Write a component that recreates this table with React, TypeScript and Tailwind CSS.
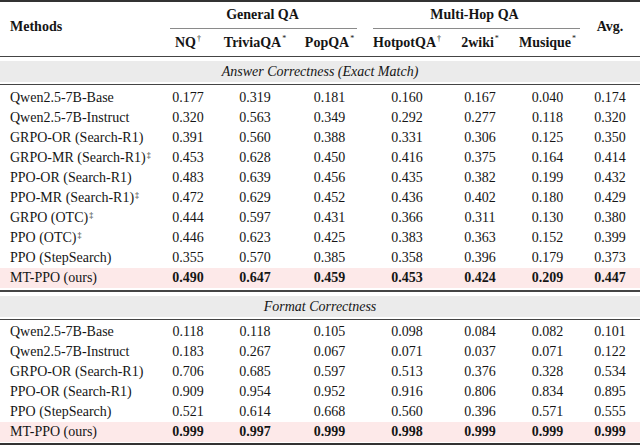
import React from "react";

type Row = { name: string; mark?: string; vals: string[]; ours?: boolean };

const answer: Row[] = [
  { name: "Qwen2.5-7B-Base", vals: ["0.177", "0.319", "0.181", "0.160", "0.167", "0.040", "0.174"] },
  { name: "Qwen2.5-7B-Instruct", vals: ["0.320", "0.563", "0.349", "0.292", "0.277", "0.118", "0.320"] },
  { name: "GRPO-OR (Search-R1)", vals: ["0.391", "0.560", "0.388", "0.331", "0.306", "0.125", "0.350"] },
  { name: "GRPO-MR (Search-R1)", mark: "‡", vals: ["0.453", "0.628", "0.450", "0.416", "0.375", "0.164", "0.414"] },
  { name: "PPO-OR (Search-R1)", vals: ["0.483", "0.639", "0.456", "0.435", "0.382", "0.199", "0.432"] },
  { name: "PPO-MR (Search-R1)", mark: "‡", vals: ["0.472", "0.629", "0.452", "0.436", "0.402", "0.180", "0.429"] },
  { name: "GRPO (OTC)", mark: "‡", vals: ["0.444", "0.597", "0.431", "0.366", "0.311", "0.130", "0.380"] },
  { name: "PPO (OTC)", mark: "‡", vals: ["0.446", "0.623", "0.425", "0.383", "0.363", "0.152", "0.399"] },
  { name: "PPO (StepSearch)", vals: ["0.355", "0.570", "0.385", "0.358", "0.396", "0.179", "0.373"] },
  { name: "MT-PPO (ours)", ours: true, vals: ["0.490", "0.647", "0.459", "0.453", "0.424", "0.209", "0.447"] },
];

const format: Row[] = [
  { name: "Qwen2.5-7B-Base", vals: ["0.118", "0.118", "0.105", "0.098", "0.084", "0.082", "0.101"] },
  { name: "Qwen2.5-7B-Instruct", vals: ["0.183", "0.267", "0.067", "0.071", "0.037", "0.071", "0.122"] },
  { name: "GRPO-OR (Search-R1)", vals: ["0.706", "0.685", "0.597", "0.513", "0.376", "0.328", "0.534"] },
  { name: "PPO-OR (Search-R1)", vals: ["0.909", "0.954", "0.952", "0.916", "0.806", "0.834", "0.895"] },
  { name: "PPO (StepSearch)", vals: ["0.521", "0.614", "0.668", "0.560", "0.396", "0.571", "0.555"] },
  { name: "MT-PPO (ours)", ours: true, vals: ["0.999", "0.997", "0.999", "0.998", "0.999", "0.999", "0.999"] },
];

const cols = "grid grid-cols-[156px_64px_70px_79px_76px_70px_65px_60px]";

function Sup({ c }: { c: string }) {
  return <span className="text-[8px] font-normal relative -top-[4px] ml-[1px]">{c}</span>;
}

function DataRow({ row }: { row: Row }) {
  return (
    <div className={`${cols} h-[20px] items-center ${row.ours ? "bg-[#fde9e9]" : ""}`}>
      <div className="pl-[10px] whitespace-nowrap">
        {row.name}
        {row.mark && <Sup c={row.mark} />}
      </div>
      {row.vals.map((v, i) => (
        <div key={i} className={`text-center ${row.ours ? "font-bold" : ""}`}>
          {v}
        </div>
      ))}
    </div>
  );
}

function Section({ title }: { title: string }) {
  return <div className="h-[21px] bg-[#ebebeb] flex items-center justify-center italic">{title}</div>;
}

export default function App() {
  return (
    <div
      className="w-[640px] h-[446px] bg-white text-[14px] leading-none text-[#151515] overflow-hidden"
      style={{ fontFamily: '"Liberation Serif", "Times New Roman", serif' }}
    >
      <div className="border-t-2 border-[#333]" />
      {/* header */}
      <div className={`${cols} grid-rows-[27px_27px] font-bold`}>
        <div className="row-span-2 flex items-center pl-[10px] pb-[5px]">Methods</div>
        <div className="col-span-3 flex flex-col">
          <div className="flex-1 flex items-center justify-center">General QA</div>
          <div className="h-px bg-[#8a8a8a] ml-[14px] mr-[12px]" />
        </div>
        <div className="col-span-3 flex flex-col">
          <div className="flex-1 flex items-center justify-center">Multi-Hop QA</div>
          <div className="h-px bg-[#8a8a8a] ml-[4px]" />
        </div>
        <div className="row-span-2 flex items-center justify-center pb-[5px]">Avg.</div>
        <div className="flex items-center justify-center">
          NQ<Sup c="†" />
        </div>
        <div className="flex items-center justify-center">
          TriviaQA<Sup c="*" />
        </div>
        <div className="flex items-center justify-center">
          PopQA<Sup c="*" />
        </div>
        <div className="flex items-center justify-center">
          HotpotQA<Sup c="†" />
        </div>
        <div className="flex items-center justify-center">
          2wiki<Sup c="*" />
        </div>
        <div className="flex items-center justify-center">
          Musique<Sup c="*" />
        </div>
      </div>
      <div className="border-t border-[#444]" />
      <div className="pt-[4px] pb-[2px]">
        <Section title="Answer Correctness (Exact Match)" />
      </div>
      <div className="border-t border-[#444]" />
      <div className="pt-[3px] pb-[2px]">
        {answer.map((r) => (
          <DataRow key={r.name} row={r} />
        ))}
      </div>
      <div className="border-t-2 border-[#444]" />
      <div className="pt-[4px] pb-[2px]">
        <Section title="Format Correctness" />
      </div>
      <div className="border-t border-[#444]" />
      <div className="pt-[2px] pb-[1px]">
        {format.map((r) => (
          <DataRow key={r.name} row={r} />
        ))}
      </div>
      <div className="border-t-2 border-[#333]" />
    </div>
  );
}
